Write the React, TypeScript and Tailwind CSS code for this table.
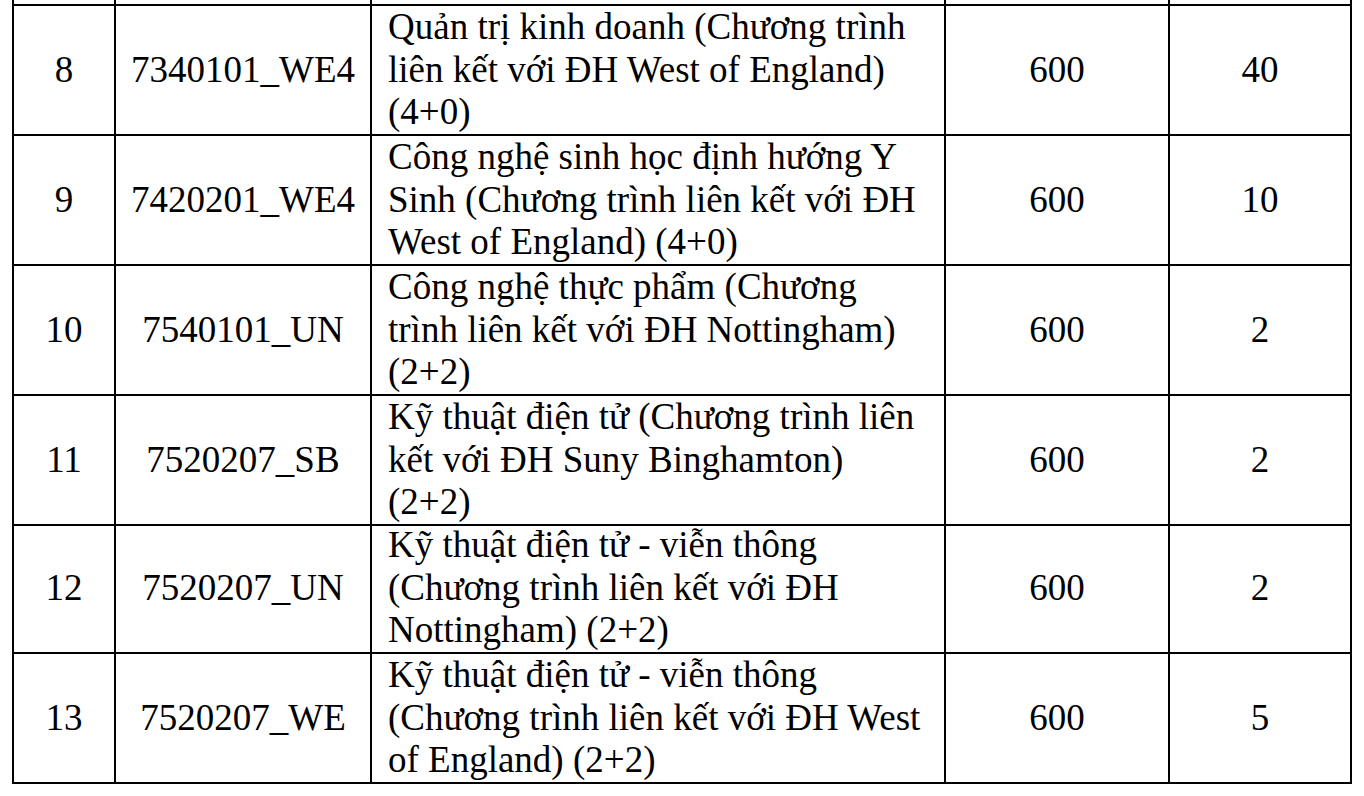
import React from "react";

type Row = {
  no: string;
  code: string;
  lines: string[];
  target: string;
  quota: string;
  h: string;
  first?: boolean;
};

const rows: Row[] = [
  {
    no: "8",
    code: "7340101_WE4",
    lines: [
      "Quản trị kinh doanh (Chương trình",
      "liên kết với ĐH West of England)",
      "(4+0)",
    ],
    target: "600",
    quota: "40",
    h: "h-[132px]",
    first: true,
  },
  {
    no: "9",
    code: "7420201_WE4",
    lines: [
      "Công nghệ sinh học định hướng Y",
      "Sinh (Chương trình liên kết với ĐH",
      "West of England) (4+0)",
    ],
    target: "600",
    quota: "10",
    h: "h-[130px]",
  },
  {
    no: "10",
    code: "7540101_UN",
    lines: [
      "Công nghệ thực phẩm (Chương",
      "trình liên kết với ĐH Nottingham)",
      "(2+2)",
    ],
    target: "600",
    quota: "2",
    h: "h-[130px]",
  },
  {
    no: "11",
    code: "7520207_SB",
    lines: [
      "Kỹ thuật điện tử (Chương trình liên",
      "kết với ĐH Suny Binghamton)",
      "(2+2)",
    ],
    target: "600",
    quota: "2",
    h: "h-[128px]",
  },
  {
    no: "12",
    code: "7520207_UN",
    lines: [
      "Kỹ thuật điện tử - viễn thông",
      "(Chương trình liên kết với ĐH",
      "Nottingham) (2+2)",
    ],
    target: "600",
    quota: "2",
    h: "h-[130px]",
  },
  {
    no: "13",
    code: "7520207_WE",
    lines: [
      "Kỹ thuật điện tử - viễn thông",
      "(Chương trình liên kết với ĐH West",
      "of England) (2+2)",
    ],
    target: "600",
    quota: "5",
    h: "h-[130px]",
  },
];

export default function App() {
  return (
    <div className="w-[1364px] h-[796px] overflow-hidden bg-white text-black font-[family-name:Liberation_Serif,serif] text-[37px] leading-[42.5px]">
      <div className="ml-[12px] w-[1340px]">
        {/* stub of the previous row, cut off at the top */}
        <div className="grid grid-cols-[104px_256px_574px_224px_182px] h-[4px]">
          <div className="border-l-2 border-r-2 border-black" />
          <div className="border-r-2 border-black" />
          <div className="border-r-2 border-black" />
          <div className="border-r-2 border-black" />
          <div className="border-r-2 border-black" />
        </div>
        {rows.map((r) => (
          <div
            key={r.no}
            className={`grid grid-cols-[104px_256px_574px_224px_182px] ${r.h}`}
          >
            <div
              className={`flex items-center justify-center border-l-2 border-r-2 border-b-2 border-black ${
                r.first ? "border-t-2" : ""
              }`}
            >
              {r.no}
            </div>
            <div
              className={`flex items-center justify-center border-r-2 border-b-2 border-black whitespace-nowrap ${
                r.first ? "border-t-2" : ""
              }`}
            >
              {r.code}
            </div>
            <div
              className={`flex flex-col justify-center pl-[16px] border-r-2 border-b-2 border-black whitespace-nowrap ${
                r.first ? "border-t-2" : ""
              }`}
            >
              {r.lines.map((l, i) => (
                <div key={i}>{l}</div>
              ))}
            </div>
            <div
              className={`flex items-center justify-center border-r-2 border-b-2 border-black ${
                r.first ? "border-t-2" : ""
              }`}
            >
              {r.target}
            </div>
            <div
              className={`flex items-center justify-center border-r-2 border-b-2 border-black ${
                r.first ? "border-t-2" : ""
              }`}
            >
              {r.quota}
            </div>
          </div>
        ))}
      </div>
    </div>
  );
}
